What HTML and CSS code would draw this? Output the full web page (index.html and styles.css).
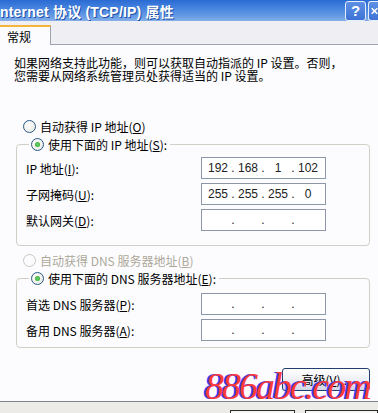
FILE: index.html
```html
<!DOCTYPE html>
<html lang="zh-CN">
<head>
<meta charset="utf-8">
<title>Internet 协议 (TCP/IP) 属性</title>
<link rel="stylesheet" href="styles.css">
</head>
<body>
<div class="window">
  <div class="titlebar">
    <span class="title">nternet 协议 (TCP/IP) 属性</span>
    <span class="tbtn help">?</span>
    <span class="tbtn close">
      <svg width="10" height="12" viewBox="0 0 10 12"><path d="M1 2 L9 10 M9 2 L1 10" stroke="#fff" stroke-width="2.2"/></svg>
    </span>
  </div>
  <div class="tabs">
    <div class="tab">常规</div>
  </div>
  <div class="panel">
    <p class="intro">如果网络支持此功能，则可以获取自动指派的 IP 设置。否则，<br>您需要从网络系统管理员处获得适当的 IP 设置。</p>

    <div class="radio-row first"><span class="radio"></span><span>自动获得 IP 地址(<u>O</u>)</span></div>
    <fieldset class="group">
      <legend><span class="radio on"></span><span>使用下面的 IP 地址(<u>S</u>):</span></legend>
      <div class="field"><span class="lbl">IP 地址(<u>I</u>):</span><span class="ip"><span class="seg">192</span><span class="dot">.</span><span class="seg">168</span><span class="dot">.</span><span class="seg">1</span><span class="dot">.</span><span class="seg">102</span></span></div>
      <div class="field"><span class="lbl">子网掩码(<u>U</u>):</span><span class="ip"><span class="seg">255</span><span class="dot">.</span><span class="seg">255</span><span class="dot">.</span><span class="seg">255</span><span class="dot">.</span><span class="seg">0</span></span></div>
      <div class="field"><span class="lbl">默认网关(<u>D</u>):</span><span class="ip"><span class="seg"></span><span class="dot">.</span><span class="seg"></span><span class="dot">.</span><span class="seg"></span><span class="dot">.</span><span class="seg"></span></span></div>
    </fieldset>

    <div class="radio-row disabled"><span class="radio"></span><span>自动获得 DNS 服务器地址(<u>B</u>)</span></div>
    <fieldset class="group dns">
      <legend><span class="radio on"></span><span>使用下面的 DNS 服务器地址(<u>E</u>):</span></legend>
      <div class="field"><span class="lbl">首选 DNS 服务器(<u>P</u>):</span><span class="ip"><span class="seg"></span><span class="dot">.</span><span class="seg"></span><span class="dot">.</span><span class="seg"></span><span class="dot">.</span><span class="seg"></span></span></div>
      <div class="field"><span class="lbl">备用 DNS 服务器(<u>A</u>):</span><span class="ip"><span class="seg"></span><span class="dot">.</span><span class="seg"></span><span class="dot">.</span><span class="seg"></span><span class="dot">.</span><span class="seg"></span></span></div>
    </fieldset>

    <div class="actions"><button class="btn">高级(<u>V</u>)...</button></div>
  </div>
  <div class="footer">
    <span class="fbtn one"></span><span class="fbtn two"></span>
  </div>
  <div class="watermark">886abc.com</div>
</div>
</body>
</html>
```
FILE: styles.css
```css
* { box-sizing: border-box; }
html, body { margin: 0; padding: 0; }
body {
  width: 378px;
  height: 413px;
  overflow: hidden;
  font-family: "Noto Sans CJK SC", "Liberation Sans", sans-serif;
  font-size: 12px;
  color: #000;
  background: #ecebe8;
}
.window { position: relative; width: 378px; height: 413px; display: flex; flex-direction: column; overflow: hidden; }
.titlebar {
  height: 21px;
  display: flex;
  align-items: center;
  background: linear-gradient(#2a6bd4, #4a87e0 45%, #6a9de4 80%, #86b0ea);
  overflow: hidden;
}
.title {
  flex: 1;
  color: #fff;
  font-family: "Liberation Sans", "Noto Sans CJK SC", sans-serif;
  font-weight: bold;
  font-size: 14px;
  letter-spacing: 0.2px;
  text-shadow: 1px 1px 0 #1d4fa8;
  white-space: nowrap;
}
.tbtn {
  width: 21px; height: 20px;
  border: 1px solid #e6eefa;
  border-radius: 3px;
  background: linear-gradient(#5e90e4, #3e73d6);
  color: #fff;
  font-family: "Liberation Sans", sans-serif;
  font-weight: bold;
  font-size: 15px;
  display: flex; align-items: center; justify-content: center;
  flex: none;
}
.help { margin-right: 2px; }
.close { width: 10px; justify-content: flex-start; padding-left: 2px; border-right: none; border-radius: 3px 0 0 3px; overflow: hidden; }
.tabs {
  height: 24px;
  background: #efeef2;
  border-bottom: 1px solid #9ea3b0;
  display: flex;
  align-items: flex-end;
}
.tab {
  width: 51px; height: 20px;
  margin-bottom: -1px;
  background: #fcfcfe;
  border-top: 2px solid #f5b53a;
  border-right: 1px solid #9ea3b0;
  padding: 2px 0 0 7px;
  font-size: 12px;
  line-height: 15px;
}
.panel {
  height: 357px;
  background: #fcfcfe;
  border-bottom: 1px solid #7f8590;
  padding: 11px 0 0 0;
  display: flex;
  flex-direction: column;
}
.intro { margin: 0 0 0 14px; line-height: 13px; font-size: 12px; white-space: nowrap; }
.radio-row { display: flex; align-items: center; height: 16px; padding-left: 23px; gap: 4px; }
.radio-row.first { margin-top: 36px; }
.radio {
  width: 13px; height: 13px;
  border-radius: 50%;
  border: 1px solid #2a5a8a;
  background: radial-gradient(circle at 40% 40%, #fff, #e4e4dc);
  display: inline-flex; align-items: center; justify-content: center;
  flex: none;
}
.radio.on::after { content: ""; width: 5px; height: 5px; border-radius: 50%; background: radial-gradient(circle, #6fd26f, #21a121); }
.disabled { color: #aca899; margin-top: 6px; }
.disabled .radio { border-color: #c8c8c0; background: #fcfcfe; }
.group {
  margin: 2px 8px 0 16px;
  border: 1px solid #d0d0c8;
  border-radius: 4px;
  padding: 3px 0 12px 9px;
  min-width: 0;
}
.group legend {
  display: flex; align-items: center; gap: 4px;
  padding: 0 3px 0 2px;
  margin-left: 3px;
  height: 16px;
}
.field { display: grid; grid-template-columns: 175px 125px; align-items: center; height: 26px; }
.lbl { white-space: nowrap; }
.ip {
  height: 22px;
  border: 1px solid #8e97a8;
  background: #fff;
  display: flex; align-items: center;
  padding-left: 4px;
  font-family: "Liberation Sans", sans-serif;
  font-size: 12px;
  color: #222;
}
.seg { width: 24px; text-align: center; }
.dot { width: 6px; text-align: center; }
.dns { padding-top: 5px; padding-bottom: 4px; }
.actions { display: flex; justify-content: flex-end; padding: 20px 8px 0 0; }
.btn {
  width: 88px; height: 23px;
  border: 1px solid #1f3f6e;
  border-radius: 3px;
  background: linear-gradient(#ffffff, #eef0f6 50%, #d0d6e4);
  font-family: "Noto Sans CJK SC", sans-serif;
  font-size: 12px;
  padding: 0;
  color: #000;
}
.footer { flex: 1; position: relative; background: #ecebe8; display: flex; align-items: flex-end; }
.fbtn { height: 3px; border-top: 1px solid #2a2a2a; border-left: 1px solid #2a2a2a; border-right: 1px solid #2a2a2a; background: #f4f4f4; }
.fbtn.one { margin-left: 230px; width: 72px; }
.fbtn.two { margin-left: 10px; width: 80px; }
.watermark {
  position: absolute;
  left: 205px; top: 364px;
  font-family: "Liberation Serif", serif;
  font-style: italic;
  font-size: 38px;
  line-height: 44px;
  letter-spacing: -2px;
  color: #ff3b3b;
  text-shadow: -2px 0 0 #3b3bff;
  white-space: nowrap;
}
```
